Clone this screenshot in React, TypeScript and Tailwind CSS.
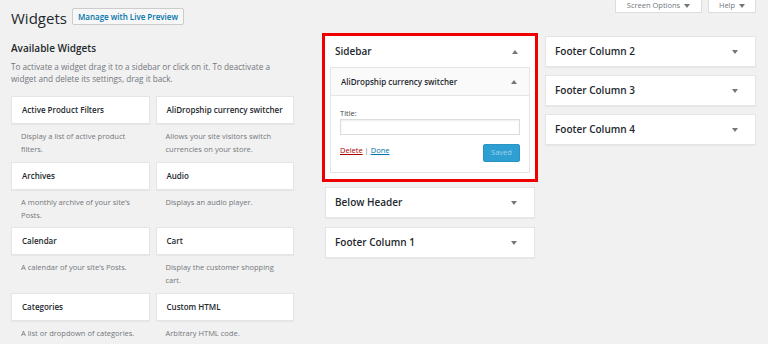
import React from "react";

const widgets = [
  ["Active Product Filters", "Display a list of active product filters."],
  ["AliDropship currency switcher", "Allows your site visitors switch currencies on your store."],
  ["Archives", "A monthly archive of your site’s Posts."],
  ["Audio", "Displays an audio player."],
  ["Calendar", "A calendar of your site’s Posts."],
  ["Cart", "Display the customer shopping cart."],
  ["Categories", "A list or dropdown of categories."],
  ["Custom HTML", "Arbitrary HTML code."],
];

function Caret({ up = false, className = "" }: { up?: boolean; className?: string }) {
  return (
    <svg width="6" height="4" viewBox="0 0 6 4" className={className}>
      <polygon points={up ? "0,4 6,4 3,0" : "0,0 6,0 3,4"} fill="currentColor" />
    </svg>
  );
}

function SidebarPanel({ name }: { name: string }) {
  return (
    <div className="h-[31px] bg-white border border-[#e5e5e5] shadow-[0_1px_1px_rgba(0,0,0,0.04)] flex items-center justify-between pl-[9px] pr-[17px]">
      <span className="text-[10px] font-semibold text-[#23282d]">{name}</span>
      <Caret className="text-[#72777c]" />
    </div>
  );
}

export default function App() {
  return (
    <div
      className="w-[768px] h-[344px] overflow-hidden bg-[#f1f1f1] text-[#444]"
      style={{ fontFamily: '"Open Sans", "Liberation Sans", sans-serif' }}
    >
      {/* header */}
      <div className="h-[33px] flex items-start">
        <div className="flex items-start pl-[11px] pt-[8px] gap-[5px]">
          <h1 className="text-[15px] leading-[20px] text-[#23282d]">Widgets</h1>
          <button className="h-[17px] px-[5px] bg-[#f7f7f7] border border-[#cccccc] rounded-[2px] text-[8px] font-semibold text-[#0073aa] leading-none">
            Manage with Live Preview
          </button>
        </div>
        <div className="ml-auto mr-[12px] flex gap-[6px]">
          <div className="h-[13px] w-[87px] bg-white border border-t-0 border-[#dddddd] flex items-center justify-center gap-[4px] text-[7.5px] text-[#72777c]">
            Screen Options <Caret className="text-[#72777c]" />
          </div>
          <div className="h-[13px] w-[48px] bg-white border border-t-0 border-[#dddddd] flex items-center justify-center gap-[4px] text-[7.5px] text-[#72777c]">
            Help <Caret className="text-[#72777c]" />
          </div>
        </div>
      </div>

      {/* columns */}
      <div className="flex items-start pl-[11px]">
        {/* available widgets */}
        <div className="w-[283px] pt-[8px]">
          <h2 className="text-[10px] leading-[14px] font-semibold text-[#23282d]">Available Widgets</h2>
          <p className="mt-[6px] text-[8.2px] leading-[12px] text-[#72777c]">
            To activate a widget drag it to a sidebar or click on it. To deactivate a widget and delete its settings, drag it back.
          </p>
          <div className="mt-[11px] grid grid-cols-2 gap-x-[6px]">
            {widgets.map(([title, desc]) => (
              <div key={title} className="h-[65.6px]">
                <div className="h-[28px] bg-white border border-[#e5e5e5] shadow-[0_1px_1px_rgba(0,0,0,0.04)] flex items-center pl-[10px]">
                  <span className="text-[8px] font-semibold text-[#23282d]">{title}</span>
                </div>
                <p className="pt-[6px] px-[10px] text-[7.5px] leading-[13px] text-[#72777c]">{desc}</p>
              </div>
            ))}
          </div>
        </div>

        {/* middle sidebars */}
        <div className="ml-[28px] w-[216px]">
          <div className="border-[3px] border-[#ee0000]">
            <div className="bg-white">
              <div className="h-[31px] flex items-center justify-between pl-[10px] pr-[17px]">
                <span className="text-[10px] font-semibold text-[#23282d]">Sidebar</span>
                <Caret up className="text-[#72777c]" />
              </div>
              <div className="px-[5px] pb-[6px]">
                <div className="border border-[#e5e5e5]">
                  <div className="h-[28px] bg-[#fafafa] border-b border-[#e5e5e5] flex items-center justify-between pl-[10px] pr-[12px]">
                    <span className="text-[8px] font-semibold text-[#23282d]">AliDropship currency switcher</span>
                    <Caret up className="text-[#72777c]" />
                  </div>
                  <div className="bg-white px-[9px] pt-[11px] pb-[10px]">
                    <div className="text-[7.5px] leading-[12px] text-[#444]">Title:</div>
                    <div className="h-[16px] border border-[#dddddd] shadow-[inset_0_1px_2px_rgba(0,0,0,0.07)]" />
                    <div className="mt-[9px] flex items-start justify-between">
                      <div className="text-[7.5px] leading-[12px]">
                        <span className="text-[#a00] underline">Delete</span>
                        <span className="text-[#72777c]"> | </span>
                        <span className="text-[#0073aa] underline">Done</span>
                      </div>
                      <button className="h-[18px] w-[37px] rounded-[2px] bg-[#2e9fd2] border border-[#2a93c4] text-[7.5px] text-[#9fd3ec]">
                        Saved
                      </button>
                    </div>
                  </div>
                </div>
              </div>
            </div>
          </div>
          <div className="mx-[3px] mt-[5px] flex flex-col gap-[9px]">
            <SidebarPanel name="Below Header" />
            <SidebarPanel name="Footer Column 1" />
          </div>
        </div>

        {/* right sidebars */}
        <div className="ml-[7px] w-[211px] mt-[3px] flex flex-col gap-[8px]">
          <SidebarPanel name="Footer Column 2" />
          <SidebarPanel name="Footer Column 3" />
          <SidebarPanel name="Footer Column 4" />
        </div>
      </div>
    </div>
  );
}
